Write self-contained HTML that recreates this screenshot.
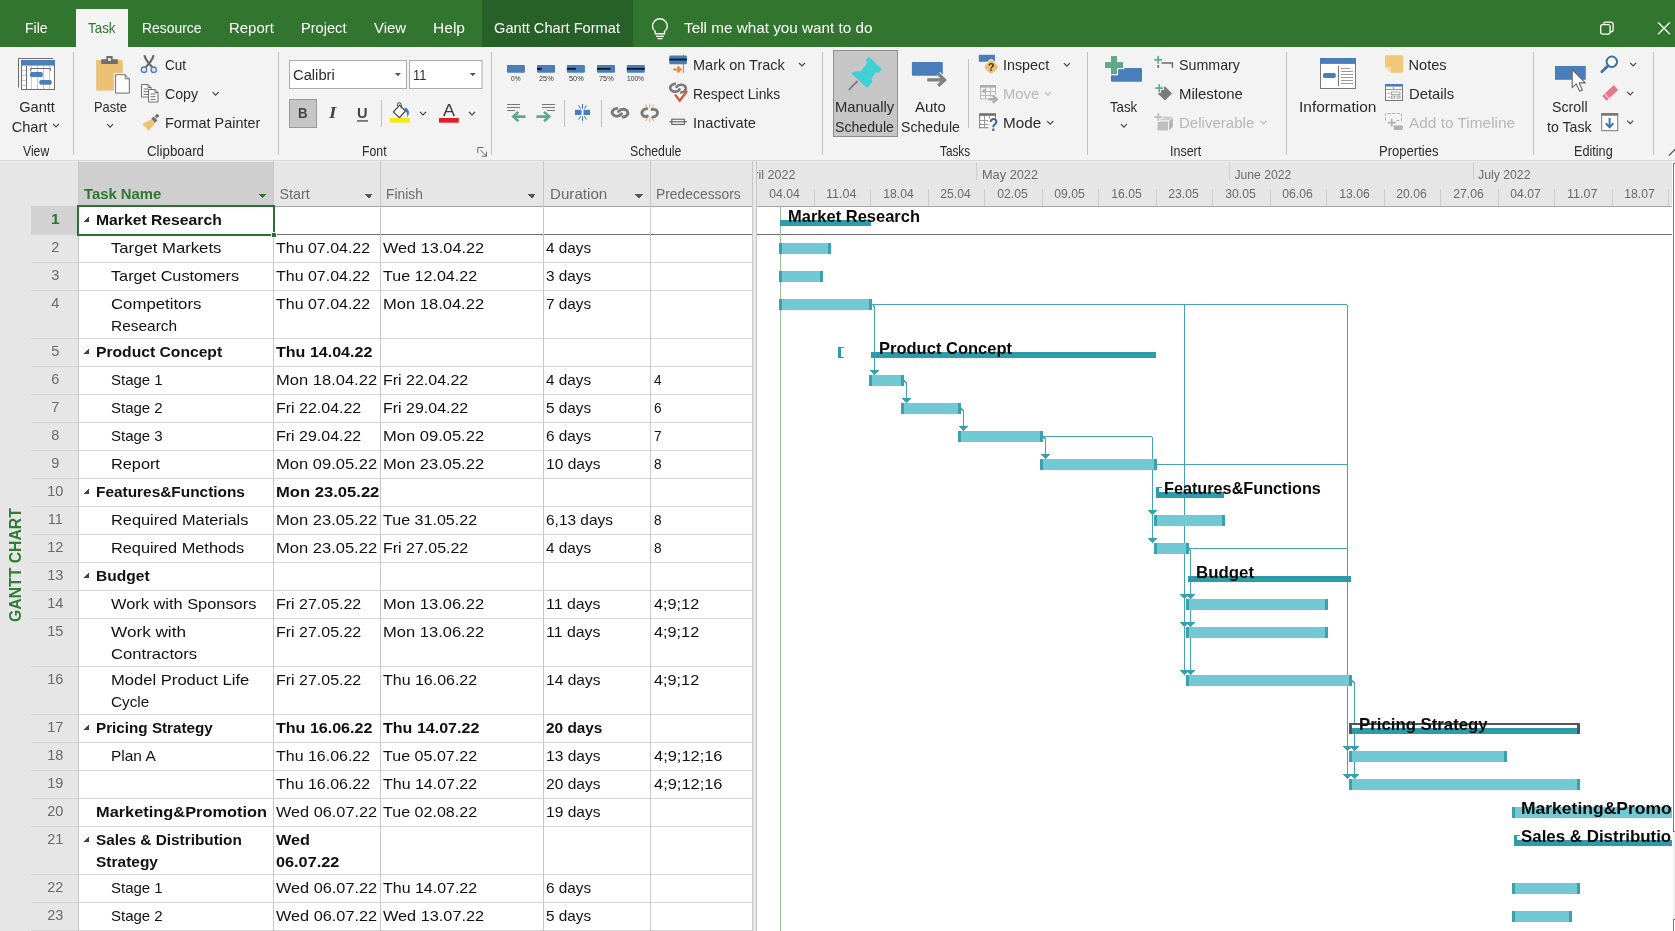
<!DOCTYPE html>
<html><head><meta charset="utf-8"><title>Project</title>
<style>
html,body{margin:0;padding:0}
body{width:1675px;height:931px;overflow:hidden;position:relative;background:#fff;font-family:"Liberation Sans",sans-serif;color:#262626}
.t{position:absolute;white-space:nowrap;line-height:1;transform-origin:0 0}
svg{position:absolute;left:0;top:0}
.clip{position:absolute;overflow:hidden}
.clip .t{}
.vl{position:absolute;left:7px;top:622px;font-size:16.5px;font-weight:700;color:#2E7D32;white-space:nowrap;line-height:1;transform-origin:0 0;transform:rotate(-90deg) scaleX(0.955)}
</style></head><body>
<svg width="1675" height="931" viewBox="0 0 1675 931" shape-rendering="crispEdges">
<rect x="0" y="161" width="1675" height="770" fill="#fff"/>
<rect x="0" y="161" width="78" height="770" fill="#E6E6E6"/>
<rect x="78" y="161" width="674" height="45" fill="#E6E6E6"/>
<rect x="78" y="161" width="195" height="45" fill="#CFCFCF"/>
<rect x="31" y="206" width="47" height="28" fill="#D2D2D2"/>
<rect x="752" y="161" width="5" height="770" fill="#E8E8E8"/>
<rect x="757" y="161" width="915" height="45" fill="#E6E6E6"/>
<rect x="0" y="160" width="1675" height="1" fill="#D6D6D6"/>
<rect x="0" y="161" width="1675" height="1" fill="#EDEDED"/>
<rect x="31" y="234" width="47" height="1" fill="#D4D4D4"/>
<rect x="78" y="234" width="674" height="1" fill="#6E6E6E"/>
<rect x="31" y="262" width="47" height="1" fill="#D4D4D4"/>
<rect x="78" y="262" width="674" height="1" fill="#D4D4D4"/>
<rect x="31" y="290" width="47" height="1" fill="#D4D4D4"/>
<rect x="78" y="290" width="674" height="1" fill="#D4D4D4"/>
<rect x="31" y="338" width="47" height="1" fill="#D4D4D4"/>
<rect x="78" y="338" width="674" height="1" fill="#D4D4D4"/>
<rect x="31" y="366" width="47" height="1" fill="#D4D4D4"/>
<rect x="78" y="366" width="674" height="1" fill="#D4D4D4"/>
<rect x="31" y="394" width="47" height="1" fill="#D4D4D4"/>
<rect x="78" y="394" width="674" height="1" fill="#D4D4D4"/>
<rect x="31" y="422" width="47" height="1" fill="#D4D4D4"/>
<rect x="78" y="422" width="674" height="1" fill="#D4D4D4"/>
<rect x="31" y="450" width="47" height="1" fill="#D4D4D4"/>
<rect x="78" y="450" width="674" height="1" fill="#D4D4D4"/>
<rect x="31" y="478" width="47" height="1" fill="#D4D4D4"/>
<rect x="78" y="478" width="674" height="1" fill="#D4D4D4"/>
<rect x="31" y="506" width="47" height="1" fill="#D4D4D4"/>
<rect x="78" y="506" width="674" height="1" fill="#D4D4D4"/>
<rect x="31" y="534" width="47" height="1" fill="#D4D4D4"/>
<rect x="78" y="534" width="674" height="1" fill="#D4D4D4"/>
<rect x="31" y="562" width="47" height="1" fill="#D4D4D4"/>
<rect x="78" y="562" width="674" height="1" fill="#D4D4D4"/>
<rect x="31" y="590" width="47" height="1" fill="#D4D4D4"/>
<rect x="78" y="590" width="674" height="1" fill="#D4D4D4"/>
<rect x="31" y="618" width="47" height="1" fill="#D4D4D4"/>
<rect x="78" y="618" width="674" height="1" fill="#D4D4D4"/>
<rect x="31" y="666" width="47" height="1" fill="#D4D4D4"/>
<rect x="78" y="666" width="674" height="1" fill="#D4D4D4"/>
<rect x="31" y="714" width="47" height="1" fill="#D4D4D4"/>
<rect x="78" y="714" width="674" height="1" fill="#D4D4D4"/>
<rect x="31" y="742" width="47" height="1" fill="#D4D4D4"/>
<rect x="78" y="742" width="674" height="1" fill="#D4D4D4"/>
<rect x="31" y="770" width="47" height="1" fill="#D4D4D4"/>
<rect x="78" y="770" width="674" height="1" fill="#D4D4D4"/>
<rect x="31" y="798" width="47" height="1" fill="#D4D4D4"/>
<rect x="78" y="798" width="674" height="1" fill="#D4D4D4"/>
<rect x="31" y="826" width="47" height="1" fill="#D4D4D4"/>
<rect x="78" y="826" width="674" height="1" fill="#D4D4D4"/>
<rect x="31" y="874" width="47" height="1" fill="#D4D4D4"/>
<rect x="78" y="874" width="674" height="1" fill="#D4D4D4"/>
<rect x="31" y="902" width="47" height="1" fill="#D4D4D4"/>
<rect x="78" y="902" width="674" height="1" fill="#D4D4D4"/>
<rect x="31" y="930" width="47" height="1" fill="#D4D4D4"/>
<rect x="78" y="930" width="674" height="1" fill="#D4D4D4"/>
<rect x="78" y="206" width="674" height="1" fill="#A6A6A6"/>
<rect x="78" y="161" width="1" height="770" fill="#C8C8C8"/>
<rect x="273" y="161" width="1" height="770" fill="#C8C8C8"/>
<rect x="380" y="161" width="1" height="770" fill="#C8C8C8"/>
<rect x="543" y="161" width="1" height="770" fill="#C8C8C8"/>
<rect x="650" y="161" width="1" height="770" fill="#C8C8C8"/>
<rect x="752" y="161" width="1" height="770" fill="#C8C8C8"/>
<rect x="756" y="161" width="1" height="770" fill="#C8C8C8"/>
<rect x="78" y="206" width="196" height="29" fill="#fff" stroke="#2F6F33" stroke-width="2"/>
<rect x="271.5" y="232.5" width="5" height="5" fill="#2F6F33" stroke="#fff" stroke-width="1"/>
<path d="M258.3 193.8h8.4l-4.2 4.6z" fill="#2E7530"/>
<path d="M364.6 193.8h8.4l-4.2 4.6z" fill="#555"/>
<path d="M527.5999999999999 193.8h8.4l-4.2 4.6z" fill="#555"/>
<path d="M634.8 193.8h8.4l-4.2 4.6z" fill="#555"/>
<path d="M83 222h6v-6z" fill="#444"/>
<path d="M83 354h6v-6z" fill="#444"/>
<path d="M83 494h6v-6z" fill="#444"/>
<path d="M83 578h6v-6z" fill="#444"/>
<path d="M83 730h6v-6z" fill="#444"/>
<path d="M83 842h6v-6z" fill="#444"/>
<rect x="814" y="189" width="1" height="17" fill="#CDCDCD"/>
<rect x="870" y="189" width="1" height="17" fill="#CDCDCD"/>
<rect x="928" y="189" width="1" height="17" fill="#CDCDCD"/>
<rect x="984" y="189" width="1" height="17" fill="#CDCDCD"/>
<rect x="1042" y="189" width="1" height="17" fill="#CDCDCD"/>
<rect x="1098" y="189" width="1" height="17" fill="#CDCDCD"/>
<rect x="1156" y="189" width="1" height="17" fill="#CDCDCD"/>
<rect x="1212" y="189" width="1" height="17" fill="#CDCDCD"/>
<rect x="1270" y="189" width="1" height="17" fill="#CDCDCD"/>
<rect x="1326" y="189" width="1" height="17" fill="#CDCDCD"/>
<rect x="1384" y="189" width="1" height="17" fill="#CDCDCD"/>
<rect x="1440" y="189" width="1" height="17" fill="#CDCDCD"/>
<rect x="1498" y="189" width="1" height="17" fill="#CDCDCD"/>
<rect x="1554" y="189" width="1" height="17" fill="#CDCDCD"/>
<rect x="1612" y="189" width="1" height="17" fill="#CDCDCD"/>
<rect x="1668" y="189" width="1" height="17" fill="#CDCDCD"/>
<rect x="976" y="163" width="1" height="17" fill="#CDCDCD"/>
<rect x="1229" y="163" width="1" height="17" fill="#CDCDCD"/>
<rect x="1473" y="163" width="1" height="17" fill="#CDCDCD"/>
<rect x="757" y="206" width="915" height="1" fill="#A6A6A6"/>
<rect x="757" y="234" width="915" height="1" fill="#6E6E6E"/>
<rect x="780" y="207" width="1" height="724" fill="#9CC29C"/>
<g shape-rendering="crispEdges"><path d="M872 304.5H1345.5Q1347.5 304.5 1347.5 306.5V778" fill="none" stroke="#45A3AD" stroke-width="1"/><path d="M872.5 304.5L874.5 307V370" fill="none" stroke="#45A3AD" stroke-width="1"/><path d="M1184.5 304.5V674" fill="none" stroke="#45A3AD" stroke-width="1"/><path d="M904 380.5L906.5 383V398" fill="none" stroke="#45A3AD" stroke-width="1"/><path d="M961 408.5L963.5 411V426" fill="none" stroke="#45A3AD" stroke-width="1"/><path d="M1043 436.5H1150.5Q1152.5 436.5 1152.5 438.5V538" fill="none" stroke="#45A3AD" stroke-width="1"/><path d="M1043 436.5L1045.5 439V454" fill="none" stroke="#45A3AD" stroke-width="1"/><path d="M1157 464.5H1347.5" fill="none" stroke="#45A3AD" stroke-width="1"/><path d="M1189 548.5H1347.5" fill="none" stroke="#45A3AD" stroke-width="1"/><path d="M1189 548.5L1190.5 551V674" fill="none" stroke="#45A3AD" stroke-width="1"/><path d="M1352 680.5L1354.5 683V778" fill="none" stroke="#45A3AD" stroke-width="1"/></g>
<rect x="780.3" y="220" width="90.3" height="6" fill="#2E9CA8"/>
<rect x="779" y="243" width="52" height="11" fill="#73C9D3"/><rect x="779" y="243" width="3" height="11" fill="#38A3AE"/><rect x="828" y="243" width="3" height="11" fill="#38A3AE"/>
<rect x="779" y="271" width="44" height="11" fill="#73C9D3"/><rect x="779" y="271" width="3" height="11" fill="#38A3AE"/><rect x="820" y="271" width="3" height="11" fill="#38A3AE"/>
<rect x="779" y="299" width="93" height="11" fill="#73C9D3"/><rect x="779" y="299" width="3" height="11" fill="#38A3AE"/><rect x="869" y="299" width="3" height="11" fill="#38A3AE"/>
<rect x="871" y="352" width="285" height="6" fill="#2E9CA8"/>
<rect x="838" y="347" width="3" height="11" fill="#2E9CA8"/><rect x="841" y="347" width="3" height="1" fill="#2E9CA8"/><rect x="841" y="357" width="3" height="1" fill="#2E9CA8"/>
<rect x="869" y="375" width="35" height="11" fill="#73C9D3"/><rect x="869" y="375" width="3" height="11" fill="#38A3AE"/><rect x="901" y="375" width="3" height="11" fill="#38A3AE"/>
<rect x="901" y="403" width="60" height="11" fill="#73C9D3"/><rect x="901" y="403" width="3" height="11" fill="#38A3AE"/><rect x="958" y="403" width="3" height="11" fill="#38A3AE"/>
<rect x="958" y="431" width="85" height="11" fill="#73C9D3"/><rect x="958" y="431" width="3" height="11" fill="#38A3AE"/><rect x="1040" y="431" width="3" height="11" fill="#38A3AE"/>
<rect x="1040" y="459" width="117" height="11" fill="#73C9D3"/><rect x="1040" y="459" width="3" height="11" fill="#38A3AE"/><rect x="1154" y="459" width="3" height="11" fill="#38A3AE"/>
<rect x="1156" y="492" width="68" height="6" fill="#2E9CA8"/><rect x="1156" y="487" width="3" height="5" fill="#2E9CA8"/><rect x="1159" y="487" width="3" height="1" fill="#2E9CA8"/>
<rect x="1154" y="515" width="71" height="11" fill="#73C9D3"/><rect x="1154" y="515" width="3" height="11" fill="#38A3AE"/><rect x="1222" y="515" width="3" height="11" fill="#38A3AE"/>
<rect x="1154" y="543" width="35" height="11" fill="#73C9D3"/><rect x="1154" y="543" width="3" height="11" fill="#38A3AE"/><rect x="1186" y="543" width="3" height="11" fill="#38A3AE"/>
<rect x="1188" y="576" width="163" height="6" fill="#2E9CA8"/>
<rect x="1186" y="599" width="142" height="11" fill="#73C9D3"/><rect x="1186" y="599" width="3" height="11" fill="#38A3AE"/><rect x="1325" y="599" width="3" height="11" fill="#38A3AE"/>
<rect x="1186" y="627" width="142" height="11" fill="#73C9D3"/><rect x="1186" y="627" width="3" height="11" fill="#38A3AE"/><rect x="1325" y="627" width="3" height="11" fill="#38A3AE"/>
<rect x="1186" y="675" width="166" height="11" fill="#73C9D3"/><rect x="1186" y="675" width="3" height="11" fill="#38A3AE"/><rect x="1349" y="675" width="3" height="11" fill="#38A3AE"/>
<rect x="1349" y="723" width="231" height="11" fill="#fff"/>
<rect x="1352" y="728" width="225" height="6" fill="#2E9CA8"/>
<rect x="1349" y="723" width="231" height="2" fill="#555"/><rect x="1349" y="723" width="3" height="11" fill="#555"/><rect x="1577" y="723" width="3" height="11" fill="#555"/>
<rect x="1349" y="751" width="158" height="11" fill="#73C9D3"/><rect x="1349" y="751" width="3" height="11" fill="#38A3AE"/><rect x="1504" y="751" width="3" height="11" fill="#38A3AE"/>
<rect x="1349" y="779" width="231" height="11" fill="#73C9D3"/><rect x="1349" y="779" width="3" height="11" fill="#38A3AE"/><rect x="1577" y="779" width="3" height="11" fill="#38A3AE"/>
<rect x="1512" y="807" width="160" height="11" fill="#73C9D3"/><rect x="1512" y="807" width="3" height="11" fill="#38A3AE"/>
<rect x="1514" y="840" width="158" height="6" fill="#2E9CA8"/><rect x="1514" y="835" width="3" height="5" fill="#2E9CA8"/><rect x="1517" y="835" width="3" height="1" fill="#2E9CA8"/>
<rect x="1512" y="883" width="68" height="11" fill="#73C9D3"/><rect x="1512" y="883" width="3" height="11" fill="#38A3AE"/><rect x="1577" y="883" width="3" height="11" fill="#38A3AE"/>
<rect x="1512" y="911" width="60" height="11" fill="#73C9D3"/><rect x="1512" y="911" width="3" height="11" fill="#38A3AE"/><rect x="1569" y="911" width="3" height="11" fill="#38A3AE"/>
<path d="M870.0 370.2h9l-4.5 4.5z" fill="#35A3AF"/>
<path d="M902.0 398.2h9l-4.5 4.5z" fill="#35A3AF"/>
<path d="M959.0 426.2h9l-4.5 4.5z" fill="#35A3AF"/>
<path d="M1041.0 454.2h9l-4.5 4.5z" fill="#35A3AF"/>
<path d="M1148.0 510.20000000000005h9l-4.5 4.5z" fill="#35A3AF"/>
<path d="M1148.0 538.2h9l-4.5 4.5z" fill="#35A3AF"/>
<path d="M1180.0 594.2h9l-4.5 4.5z" fill="#35A3AF"/>
<path d="M1186.0 594.2h9l-4.5 4.5z" fill="#35A3AF"/>
<path d="M1180.0 622.2h9l-4.5 4.5z" fill="#35A3AF"/>
<path d="M1186.0 622.2h9l-4.5 4.5z" fill="#35A3AF"/>
<path d="M1180.0 670.2h9l-4.5 4.5z" fill="#35A3AF"/>
<path d="M1186.0 670.2h9l-4.5 4.5z" fill="#35A3AF"/>
<path d="M1343.0 746.2h9l-4.5 4.5z" fill="#35A3AF"/>
<path d="M1350.0 746.2h9l-4.5 4.5z" fill="#35A3AF"/>
<path d="M1343.0 774.2h9l-4.5 4.5z" fill="#35A3AF"/>
<path d="M1350.0 774.2h9l-4.5 4.5z" fill="#35A3AF"/>
<rect x="1672" y="161" width="3" height="770" fill="#F0F0F0"/>
<rect x="1672" y="161" width="1" height="770" fill="#fff"/>
<rect x="1673" y="163" width="2" height="669" fill="#fff"/><rect x="1673" y="163" width="1" height="669" fill="#777"/><rect x="1673" y="163" width="2" height="1" fill="#777"/><rect x="1673" y="831" width="2" height="1" fill="#777"/>
<rect x="1673" y="919" width="2" height="12" fill="#fff"/><rect x="1673" y="919" width="1" height="12" fill="#777"/><rect x="1673" y="919" width="2" height="1" fill="#777"/>
</svg>
<svg width="1675" height="162" viewBox="0 0 1675 162">
<rect x="0" y="47" width="1675" height="113" fill="#F3F3F3"/><path d="M18.5 87.5V58.5H53" fill="none" stroke="#6E6E6E" stroke-width="1"/><rect x="21.5" y="60.5" width="33" height="29" fill="#fff" stroke="#6E6E6E" stroke-width="1"/><rect x="21" y="60" width="34" height="5.6" fill="#4A7EBB"/><line x1="31.5" y1="66" x2="31.5" y2="89" stroke="#C9C9C9" stroke-width="1"/><line x1="37.5" y1="66" x2="37.5" y2="89" stroke="#C9C9C9" stroke-width="1"/><line x1="43.5" y1="66" x2="43.5" y2="89" stroke="#C9C9C9" stroke-width="1"/><line x1="49.5" y1="66" x2="49.5" y2="89" stroke="#C9C9C9" stroke-width="1"/><line x1="26.5" y1="66" x2="26.5" y2="89" stroke="#6E6E6E" stroke-width="1"/><line x1="22" y1="70.5" x2="26" y2="70.5" stroke="#C9C9C9" stroke-width="1"/><line x1="22" y1="75.5" x2="26" y2="75.5" stroke="#C9C9C9" stroke-width="1"/><line x1="22" y1="80.5" x2="26" y2="80.5" stroke="#C9C9C9" stroke-width="1"/><line x1="22" y1="85.5" x2="26" y2="85.5" stroke="#C9C9C9" stroke-width="1"/><path d="M30.5 70.7V68.5H50.5V70.7" fill="none" stroke="#6E6E6E" stroke-width="1"/><rect x="30" y="72" width="12.8" height="5" rx="1.6" fill="#4A7EBB"/><rect x="39.3" y="80" width="12.4" height="4.7" rx="1.6" fill="#4A7EBB"/><path d="M53 123.8l3 3l3-3" fill="none" stroke="#444" stroke-width="1.2"/><rect x="73" y="52" width="1" height="103" fill="#C2C2C2" shape-rendering="crispEdges"/><rect x="96.2" y="60" width="26.5" height="30.6" fill="#EBC274"/><path d="M101.2 64V59.2H106.3V56H112.7V59.2H117.8V64z" fill="#6E6E6E"/><rect x="108.1" y="58.2" width="2.8" height="2.6" fill="#F3F3F3"/><path d="M115.1 93.6V74.2H125.4L129.8 78.6V93.6z" fill="#fff" stroke="#F3F3F3" stroke-width="2.4"/><path d="M115.6 93.1V74.7H125.2L129.3 78.8V93.1z" fill="#fff" stroke="#6E6E6E" stroke-width="1"/><path d="M125.2 74.7V78.8H129.3" fill="none" stroke="#6E6E6E" stroke-width="1"/><path d="M107.1 124.2l3 3l3-3" fill="none" stroke="#444" stroke-width="1.2"/><path d="M144.4 55.3C145.6 59.6 148.6 63.6 152.4 67.2M153.6 55.3C152.4 59.6 149.4 63.6 145.6 67.2" fill="none" stroke="#666" stroke-width="2.2"/><circle cx="144" cy="69.7" r="2.7" fill="#DCE8F5" stroke="#4A7EBB" stroke-width="1.3"/><circle cx="153.7" cy="69.7" r="2.7" fill="#DCE8F5" stroke="#4A7EBB" stroke-width="1.3"/><path d="M141.5 84.5H148.0L151.0 87.5V97.0H141.5z" fill="#fff" stroke="#6E6E6E" stroke-width="1"/><path d="M148.0 84.5V87.5H151.0" fill="none" stroke="#6E6E6E" stroke-width="1"/><line x1="143.5" y1="89" x2="148.5" y2="89" stroke="#6E6E6E" stroke-width="1"/><line x1="143.5" y1="91.7" x2="148.5" y2="91.7" stroke="#6E6E6E" stroke-width="1"/><line x1="143.5" y1="94.4" x2="148.5" y2="94.4" stroke="#6E6E6E" stroke-width="1"/><path d="M148.5 89.5H155.0L158.0 92.5V102.0H148.5z" fill="#fff" stroke="#6E6E6E" stroke-width="1"/><path d="M155.0 89.5V92.5H158.0" fill="none" stroke="#6E6E6E" stroke-width="1"/><line x1="150.5" y1="94" x2="155.5" y2="94" stroke="#6E6E6E" stroke-width="1"/><line x1="150.5" y1="96.7" x2="155.5" y2="96.7" stroke="#6E6E6E" stroke-width="1"/><line x1="150.5" y1="99.4" x2="155.5" y2="99.4" stroke="#6E6E6E" stroke-width="1"/><path d="M212.6 92.1l3 3l3-3" fill="none" stroke="#444" stroke-width="1.2"/><path d="M142 124.1L151.8 119L155.3 123.1L148.6 131.1L146.2 128z" fill="#EBC274"/><path d="M151.3 118.4L153.8 116.4L157.4 120.6L155 122.7z" fill="#6E6E6E"/><path d="M154.6 115.9L157.3 113.7L159.3 116.1L156.7 118.3z" fill="#6E6E6E"/><rect x="278" y="52" width="1" height="103" fill="#C2C2C2" shape-rendering="crispEdges"/>
<rect x="0" y="0" width="1675" height="47" fill="#31752F"/><rect x="482" y="0" width="151" height="47" fill="#276127"/><rect x="76" y="9" width="52" height="38" fill="#F3F3F3"/><path d="M655.3 31.5c-2-1.6-2.8-3.4-2.8-5.3a7.4 7.4 0 0 1 14.8 0c0 1.9-.8 3.7-2.8 5.3v2.3h-9.2z" fill="none" stroke="#fff" stroke-width="1.4"/><line x1="656" y1="36.3" x2="664" y2="36.3" stroke="#fff" stroke-width="1.3"/><line x1="657.5" y1="38.6" x2="662.5" y2="38.6" stroke="#fff" stroke-width="1.3"/><rect x="1600.7" y="24.7" width="9.4" height="9.4" rx="2" fill="none" stroke="#fff" stroke-width="1.3"/><path d="M1603.6 24.5v-.4a2 2 0 0 1 2-2h5.2a2.3 2.3 0 0 1 2.3 2.3v5.4a2 2 0 0 1-2 2h-.6" fill="none" stroke="#fff" stroke-width="1.3"/><path d="M1658 22.2l12 12M1670 22.2l-12 12" fill="none" stroke="#fff" stroke-width="1.3"/>
<rect x="289.5" y="60.5" width="117" height="28" fill="#fff" stroke="#ABABAB" stroke-width="1"/><rect x="409.5" y="60.5" width="72.5" height="28" fill="#fff" stroke="#ABABAB" stroke-width="1"/><path d="M394.9 73h6l-3 3.2z" fill="#555"/><path d="M469.8 73h6l-3 3.2z" fill="#555"/><rect x="289.5" y="99.5" width="27" height="28" fill="#C6C6C6" stroke="#9A9A9A" stroke-width="1"/><rect x="357" y="120.3" width="11" height="1.3" fill="#444"/><rect x="381" y="100" width="1" height="27" fill="#C2C2C2"/><path d="M399.6 105.2L405.4 111L399.4 117.6L393.4 112z" fill="#fff" stroke="#444" stroke-width="1.2"/><path d="M401.2 108.4V104.6a1.9 1.9 0 0 0-3.8 0V106" fill="none" stroke="#444" stroke-width="1"/><path d="M404.4 107.4C408.8 108.4 410.6 112.6 407.2 117.4C407.6 114.2 407 112.6 405.2 110.8z" fill="#3F74B5"/><rect x="390" y="118" width="19.7" height="4.7" fill="#F2E61C"/><path d="M420 111.8l3 3l3-3" fill="none" stroke="#444" stroke-width="1.2"/><rect x="439" y="118" width="19.8" height="4.7" fill="#E21F26"/><path d="M469 111.8l3 3l3-3" fill="none" stroke="#444" stroke-width="1.2"/><path d="M477.8 153V147.5H483.3" fill="none" stroke="#666" stroke-width="1"/><path d="M480.5 150.2L486.3 156M486.5 151.6V156.2H481.9" fill="none" stroke="#666" stroke-width="1"/><rect x="491" y="52" width="1" height="103" fill="#C2C2C2" shape-rendering="crispEdges"/>
<rect x="506.9" y="64.9" width="18" height="7.8" rx="1" fill="#4A7EBB"/><rect x="537" y="64.9" width="18" height="7.8" rx="1" fill="#4A7EBB"/><rect x="537" y="67.9" width="4.86" height="1.9" fill="#0E1A2B"/><rect x="566.9" y="64.9" width="18" height="7.8" rx="1" fill="#4A7EBB"/><rect x="566.9" y="67.9" width="9" height="1.9" fill="#0E1A2B"/><rect x="597" y="64.9" width="18" height="7.8" rx="1" fill="#4A7EBB"/><rect x="597" y="67.9" width="13.5" height="1.9" fill="#0E1A2B"/><rect x="626.8" y="64.9" width="18" height="7.8" rx="1" fill="#4A7EBB"/><rect x="626.8" y="67.9" width="18" height="1.9" fill="#0E1A2B"/><line x1="507" y1="104.5" x2="520" y2="104.5" stroke="#777" stroke-width="1"/><line x1="507" y1="107.5" x2="520" y2="107.5" stroke="#777" stroke-width="1"/><line x1="507" y1="110.5" x2="515" y2="110.5" stroke="#777" stroke-width="1"/><path d="M525.6 116.6H514.5M518.4 111.9L513.3 116.6L518.4 121.3" fill="none" stroke="#5FA88C" stroke-width="2.6"/><line x1="542" y1="104.5" x2="555" y2="104.5" stroke="#777" stroke-width="1"/><line x1="542" y1="107.5" x2="555" y2="107.5" stroke="#777" stroke-width="1"/><line x1="547" y1="110.5" x2="555" y2="110.5" stroke="#777" stroke-width="1"/><path d="M536.4 116.6H548M544 111.9L549.2 116.6L544 121.3" fill="none" stroke="#5FA88C" stroke-width="2.6"/><rect x="564" y="100" width="1" height="27" fill="#C2C2C2"/><rect x="575" y="109.8" width="6.5" height="5.2" fill="#4A7EBB"/><rect x="583.5" y="109.8" width="6.5" height="5.2" fill="#4A7EBB"/><path d="M582.5 104V108.6M582.5 116.2V120.8M578.6 105.3L580.6 108.6M586.4 105.3L584.4 108.6M578.6 119.6L580.6 116.2M586.4 119.6L584.4 116.2" fill="none" stroke="#3F6FA8" stroke-width="1"/><rect x="601" y="100" width="1" height="27" fill="#C2C2C2"/><g fill="none" stroke="#7A7A7A" stroke-width="2.9" stroke-linecap="round"><path d="M621.5 113.9c-1.8 2.6-6.5 3.1-8.4 .8c-2.2-2.7-.3-5.8 3.8-6.3"/><path d="M618.5 111.5c1.8-2.6 6.5-3.1 8.4-.8c2.2 2.7 .3 5.8-3.8 6.3"/></g><g fill="none" stroke="#7A7A7A" stroke-width="2.9" stroke-linecap="round"><path d="M647.3000000000001 116.30000000000001c-2.3 .4-4.6-.4-5.2-2.2c-.9-2.8 1.3-5.2 4.7-5.4"/><path d="M652.1 109.5c2.3-.4 4.6 .4 5.2 2.2c.9 2.8-1.3 5.2-4.7 5.4"/></g><path d="M649.7 103.6V107.6M649.7 118.2V122.4M645.6 104.6L647.4 107.8M653.8 104.6L652 107.8M645.6 121.2L647.4 118M653.8 121.2L652 118" fill="none" stroke="#E9A55B" stroke-width="1"/><rect x="682.8" y="54.5" width="1.2" height="18.3" fill="#E58A3C"/><rect x="669.3" y="55.4" width="17.6" height="8.9" rx="1" fill="#4A7EBB"/><rect x="669.3" y="58.6" width="17.6" height="1.9" fill="#0E1A2B"/><path d="M673.2 69.4H680M677.4 66.4L680.6 69.4L677.4 72.4" fill="none" stroke="#E58A3C" stroke-width="2"/><path d="M799 63.0l3 3l3-3" fill="none" stroke="#444" stroke-width="1.2"/><g fill="none" stroke="#7A7A7A" stroke-width="2.6" stroke-linecap="round"><path d="M679.5 89.4c-1.8 2.6-6.5 3.1-8.4 .8c-2.2-2.7-.3-5.8 3.8-6.3"/><path d="M676.5 87.0c1.8-2.6 6.5-3.1 8.4-.8c2.2 2.7 .3 5.8-3.8 6.3"/></g><path d="M675 94.6L679.8 100.6L687 91" fill="none" stroke="#D2562F" stroke-width="2.3"/><rect x="671.8" y="119.2" width="12.5" height="5.2" fill="none" stroke="#555" stroke-width="1"/><line x1="669.3" y1="121.8" x2="687" y2="121.8" stroke="#555" stroke-width="1"/><rect x="822" y="52" width="1" height="103" fill="#C2C2C2" shape-rendering="crispEdges"/>
<rect x="833.5" y="50.5" width="64" height="86" fill="#C6C6C6" stroke="#8F8F8F" stroke-width="1"/><line x1="857.6" y1="81" x2="848.8" y2="89.8" stroke="#7C7C7C" stroke-width="1.8"/><path d="M865.5 60.2L869.2 57L882.1 69.3L878.9 73.1L876.4 71.7L871.6 78.3L872.4 82.2L867.1 88.1L851 73.1L856.9 71L860.6 71.6L867.4 63z" fill="#3FD0D4"/><rect x="911.9" y="62" width="30.9" height="13.8" rx="1" fill="#4A7EBB"/><path d="M927.3 79.9H944M938.2 74L944.6 79.9L938.2 85.8" fill="none" stroke="#F3F3F3" stroke-width="5.2"/><path d="M927.3 79.9H944M938.2 74L944.6 79.9L938.2 85.8" fill="none" stroke="#808080" stroke-width="3.3"/><rect x="968" y="59" width="1" height="69" fill="#C2C2C2"/><rect x="978.8" y="54.8" width="16.2" height="7" fill="#4A7EBB"/><rect x="984.9" y="60.6" width="12.6" height="12.6" rx="3.2" fill="#F3F3F3" transform="rotate(45 991.2 66.9)"/><rect x="985.8" y="61.5" width="10.8" height="10.8" rx="2.8" fill="#EBC06F" transform="rotate(45 991.2 66.9)"/><path d="M1063.9 63.2l3 3l3-3" fill="none" stroke="#444" stroke-width="1.2"/><rect x="980.5" y="85.5" width="15" height="13.5" fill="none" stroke="#B8B8B8" stroke-width="1"/><rect x="980" y="85" width="16" height="2.6" fill="#ADADAD"/><line x1="985.5" y1="87" x2="985.5" y2="99" stroke="#B8B8B8" stroke-width="1"/><line x1="990.5" y1="87" x2="990.5" y2="99" stroke="#B8B8B8" stroke-width="1"/><line x1="981" y1="91.5" x2="995" y2="91.5" stroke="#B8B8B8" stroke-width="1"/><line x1="981" y1="95.5" x2="995" y2="95.5" stroke="#B8B8B8" stroke-width="1"/><rect x="982.8" y="89.2" width="3.4" height="3.4" fill="#ADADAD"/><path d="M988.4 99.2H996M992.8 95.6L996.8 99.2L992.8 102.8" fill="none" stroke="#F3F3F3" stroke-width="4.4"/><path d="M988.4 99.2H996M992.8 95.6L996.8 99.2L992.8 102.8" fill="none" stroke="#ADADAD" stroke-width="2.5"/><path d="M1044.9 92.1l3 3l3-3" fill="none" stroke="#B8B8B8" stroke-width="1.2"/><rect x="979.7" y="113.9" width="15.8" height="13.8" fill="#fff" stroke="#777" stroke-width="1"/><rect x="979.2" y="113.4" width="16.8" height="2.5" fill="#777"/><line x1="984.5" y1="116" x2="984.5" y2="127.5" stroke="#999" stroke-width="1"/><line x1="989.5" y1="116" x2="989.5" y2="127.5" stroke="#999" stroke-width="1"/><line x1="980" y1="120.5" x2="995" y2="120.5" stroke="#999" stroke-width="1"/><line x1="980" y1="124.5" x2="995" y2="124.5" stroke="#999" stroke-width="1"/><rect x="988.3" y="118.3" width="10.5" height="14.5" fill="#F3F3F3"/><path d="M1047.2 121.1l3 3l3-3" fill="none" stroke="#444" stroke-width="1.2"/><rect x="1087" y="52" width="1" height="103" fill="#C2C2C2" shape-rendering="crispEdges"/>
<rect x="1111" y="68" width="31" height="13.8" rx="1" fill="#4A7EBB"/><rect x="1103.8" y="61" width="20.4" height="8.2" fill="#F3F3F3"/><rect x="1109.9" y="54.9" width="8.2" height="20.4" fill="#F3F3F3"/><rect x="1105" y="62.1" width="18" height="6" fill="#5FA88C"/><rect x="1111" y="56.1" width="6" height="18" fill="#5FA88C"/><path d="M1120.9 124.2l3 3l3-3" fill="none" stroke="#444" stroke-width="1.2"/><rect x="1154.3" y="58.95" width="7.8" height="1.7" fill="#5FA88C"/><rect x="1157.35" y="55.9" width="1.7" height="7.8" fill="#5FA88C"/><path d="M1161.5 63H1172.4V67.8" fill="none" stroke="#6E6E6E" stroke-width="1.5"/><rect x="1157.3" y="65" width="1.8" height="2.8" fill="#6E6E6E"/><path d="M1164.9 86.2L1172.1 93.4L1164.9 100.6L1157.7 93.4z" fill="#7B7B7B"/><rect x="1154.3" y="86.25" width="9.8" height="3.7" fill="#F3F3F3"/><rect x="1157.35" y="83.2" width="3.7" height="9.8" fill="#F3F3F3"/><rect x="1155.3" y="87.25" width="7.8" height="1.7" fill="#5FA88C"/><rect x="1158.35" y="84.2" width="1.7" height="7.8" fill="#5FA88C"/><path d="M1157.5 121.5H1168V130.5H1157.5z" fill="#BEBEBE"/><path d="M1158.5 120.3L1162.5 116.5H1172.6L1169 120.3z" fill="#CDCDCD"/><path d="M1169.2 121.3L1172.8 117.5V126.5L1169.2 130.3z" fill="#B0B0B0"/><rect x="1153.4" y="115.15" width="9.8" height="3.7" fill="#F3F3F3"/><rect x="1156.45" y="112.1" width="3.7" height="9.8" fill="#F3F3F3"/><rect x="1154.4" y="116.15" width="7.8" height="1.7" fill="#BEBEBE"/><rect x="1157.45" y="113.1" width="1.7" height="7.8" fill="#BEBEBE"/><path d="M1260.4 120.8l3 3l3-3" fill="none" stroke="#B8B8B8" stroke-width="1.2"/><rect x="1286" y="52" width="1" height="103" fill="#C2C2C2" shape-rendering="crispEdges"/>
<rect x="1320.5" y="58.5" width="35" height="30" fill="#fff" stroke="#777" stroke-width="1"/><rect x="1320" y="58" width="36" height="5.9" fill="#4A7EBB"/><line x1="1338.5" y1="66" x2="1338.5" y2="86" stroke="#777" stroke-width="1"/><rect x="1323" y="73.1" width="12.8" height="4.8" rx="1.6" fill="#4A7EBB"/><line x1="1341" y1="68.5" x2="1350" y2="68.5" stroke="#9A9A9A" stroke-width="1"/><line x1="1341" y1="71.5" x2="1353" y2="71.5" stroke="#9A9A9A" stroke-width="1"/><line x1="1341" y1="74.5" x2="1353" y2="74.5" stroke="#9A9A9A" stroke-width="1"/><line x1="1341" y1="77.5" x2="1353" y2="77.5" stroke="#9A9A9A" stroke-width="1"/><line x1="1341" y1="80.5" x2="1353" y2="80.5" stroke="#9A9A9A" stroke-width="1"/><line x1="1341" y1="83.5" x2="1353" y2="83.5" stroke="#9A9A9A" stroke-width="1"/><path d="M1385 55.2H1403.2V72.8H1391L1385 67z" fill="#EFC878"/><path d="M1385 67H1391V72.8z" fill="#F7E0AE"/><rect x="1385.5" y="84.5" width="17" height="16" fill="#fff" stroke="#777" stroke-width="1"/><rect x="1385" y="84" width="18" height="2.6" fill="#4A7EBB"/><line x1="1386" y1="89.5" x2="1402.5" y2="89.5" stroke="#999" stroke-width="1"/><line x1="1393.5" y1="87" x2="1393.5" y2="89.5" stroke="#999" stroke-width="1"/><rect x="1391.5" y="92" width="8.5" height="2.4" fill="none" stroke="#999" stroke-width="0.9"/><rect x="1391.5" y="96" width="3" height="2.2" fill="none" stroke="#999" stroke-width="0.9"/><rect x="1397" y="96" width="3" height="2.2" fill="none" stroke="#999" stroke-width="0.9"/><line x1="1387.5" y1="93.2" x2="1390" y2="93.2" stroke="#999" stroke-width="1"/><line x1="1387.5" y1="97.2" x2="1390" y2="97.2" stroke="#999" stroke-width="1"/><path d="M1385.5 120.5V113.5H1401.5V120.5H1396.5" fill="none" stroke="#ADADAD" stroke-width="1" stroke-dasharray="3 1.6"/><rect x="1387.8" y="121.85" width="7.8" height="1.7" fill="#ADADAD"/><rect x="1390.85" y="118.8" width="1.7" height="7.8" fill="#ADADAD"/><rect x="1393.2" y="125" width="10" height="5.4" rx="1.5" fill="#ADADAD" stroke="#F3F3F3" stroke-width="1"/><rect x="1533" y="52" width="1" height="103" fill="#C2C2C2" shape-rendering="crispEdges"/>
<rect x="1555" y="66" width="30.8" height="13.8" fill="#4A7EBB"/><path d="M1572.2 69.5V87.6L1576.3 83.9L1579.7 91.2L1582.4 90L1579.1 82.9L1585.3 82.9z" fill="#fff" stroke="#666" stroke-width="1.1" stroke-linejoin="round"/><circle cx="1611.8" cy="61.8" r="5.2" fill="#fff" stroke="#3E6FA3" stroke-width="2"/><line x1="1607.6" y1="66.2" x2="1601.8" y2="71.8" stroke="#3E6FA3" stroke-width="2.6" stroke-linecap="round"/><path d="M1630.2 62.900000000000006l3 3l3-3" fill="none" stroke="#444" stroke-width="1.2"/><path d="M1613.8 85.1L1618.2 89.9L1606.7 100.8L1602.2 96z" fill="#E27A8E"/><line x1="1604.6" y1="93.7" x2="1609.2" y2="98.6" stroke="#F7DDE2" stroke-width="1.1"/><path d="M1627.2 91.8l3 3l3-3" fill="none" stroke="#444" stroke-width="1.2"/><rect x="1601.7" y="113.7" width="16" height="17" fill="#fff" stroke="#777" stroke-width="1"/><rect x="1601.2" y="113.2" width="17" height="2.5" fill="#777"/><path d="M1609.6 118V126.5M1605.8 123.3L1609.6 127.2L1613.4 123.3" fill="none" stroke="#3F74B5" stroke-width="2"/><path d="M1627.2 120.7l3 3l3-3" fill="none" stroke="#444" stroke-width="1.2"/><rect x="1653" y="52" width="1" height="103" fill="#C2C2C2" shape-rendering="crispEdges"/><path d="M1669 155.5L1675 149.5" fill="none" stroke="#555" stroke-width="1.2"/>
</svg>
<div id="tx" style="position:absolute;left:0;top:0;width:1675px;height:931px;will-change:transform">
<span class="t" style="left:84.3px;top:187.0px;font-size:14.3px;font-weight:700;color:#2E7530;transform:scaleX(1.038);">Task Name</span>
<span class="t" style="left:279.5px;top:187.0px;font-size:14.3px;color:#6B6B6B;">Start</span>
<span class="t" style="left:386.1px;top:187.0px;font-size:14.3px;color:#6B6B6B;transform:scaleX(0.965);">Finish</span>
<span class="t" style="left:549.6px;top:187.0px;font-size:14.3px;color:#6B6B6B;transform:scaleX(1.060);">Duration</span>
<span class="t" style="left:656.3px;top:187.0px;font-size:14.3px;color:#6B6B6B;transform:scaleX(0.970);">Predecessors</span>
<span class="t" style="left:51.0px;top:210.7px;font-size:15.5px;font-weight:700;color:#2E7530;">1</span>
<span class="t" style="left:95.5px;top:212.8px;font-size:14.1px;font-weight:700;color:#111;transform:scaleX(1.115);">Market Research</span>
<span class="t" style="left:51.3px;top:239.6px;font-size:14.5px;color:#6A6A6A;">2</span>
<span class="t" style="left:111.3px;top:240.8px;font-size:14.1px;color:#111;transform:scaleX(1.184);">Target Markets</span>
<span class="t" style="left:276.2px;top:240.8px;font-size:14.1px;color:#111;transform:scaleX(1.133);">Thu 07.04.22</span>
<span class="t" style="left:383.3px;top:240.8px;font-size:14.1px;color:#111;transform:scaleX(1.155);">Wed 13.04.22</span>
<span class="t" style="left:546.3px;top:240.8px;font-size:14.1px;color:#111;transform:scaleX(1.088);">4 days</span>
<span class="t" style="left:51.3px;top:267.6px;font-size:14.5px;color:#6A6A6A;">3</span>
<span class="t" style="left:111.3px;top:268.8px;font-size:14.1px;color:#111;transform:scaleX(1.152);">Target Customers</span>
<span class="t" style="left:276.2px;top:268.8px;font-size:14.1px;color:#111;transform:scaleX(1.133);">Thu 07.04.22</span>
<span class="t" style="left:383.3px;top:268.8px;font-size:14.1px;color:#111;transform:scaleX(1.140);">Tue 12.04.22</span>
<span class="t" style="left:546.3px;top:268.8px;font-size:14.1px;color:#111;transform:scaleX(1.088);">3 days</span>
<span class="t" style="left:51.3px;top:295.6px;font-size:14.5px;color:#6A6A6A;">4</span>
<span class="t" style="left:111.3px;top:296.8px;font-size:14.1px;color:#111;transform:scaleX(1.190);">Competitors</span>
<span class="t" style="left:111.3px;top:318.8px;font-size:14.1px;color:#111;transform:scaleX(1.096);">Research</span>
<span class="t" style="left:276.2px;top:296.8px;font-size:14.1px;color:#111;transform:scaleX(1.133);">Thu 07.04.22</span>
<span class="t" style="left:383.3px;top:296.8px;font-size:14.1px;color:#111;transform:scaleX(1.173);">Mon 18.04.22</span>
<span class="t" style="left:546.3px;top:296.8px;font-size:14.1px;color:#111;transform:scaleX(1.088);">7 days</span>
<span class="t" style="left:51.3px;top:343.6px;font-size:14.5px;color:#6A6A6A;">5</span>
<span class="t" style="left:95.5px;top:344.8px;font-size:14.1px;font-weight:700;color:#111;transform:scaleX(1.111);">Product Concept</span>
<span class="t" style="left:51.3px;top:371.6px;font-size:14.5px;color:#6A6A6A;">6</span>
<span class="t" style="left:111.3px;top:372.8px;font-size:14.1px;color:#111;transform:scaleX(1.064);">Stage 1</span>
<span class="t" style="left:276.2px;top:372.8px;font-size:14.1px;color:#111;transform:scaleX(1.173);">Mon 18.04.22</span>
<span class="t" style="left:383.3px;top:372.8px;font-size:14.1px;color:#111;transform:scaleX(1.133);">Fri 22.04.22</span>
<span class="t" style="left:546.3px;top:372.8px;font-size:14.1px;color:#111;transform:scaleX(1.088);">4 days</span>
<span class="t" style="left:653.5px;top:372.8px;font-size:14.1px;color:#111;transform:scaleX(0.969);">4</span>
<span class="t" style="left:51.3px;top:399.6px;font-size:14.5px;color:#6A6A6A;">7</span>
<span class="t" style="left:111.3px;top:400.8px;font-size:14.1px;color:#111;transform:scaleX(1.064);">Stage 2</span>
<span class="t" style="left:276.2px;top:400.8px;font-size:14.1px;color:#111;transform:scaleX(1.133);">Fri 22.04.22</span>
<span class="t" style="left:383.3px;top:400.8px;font-size:14.1px;color:#111;transform:scaleX(1.133);">Fri 29.04.22</span>
<span class="t" style="left:546.3px;top:400.8px;font-size:14.1px;color:#111;transform:scaleX(1.088);">5 days</span>
<span class="t" style="left:653.5px;top:400.8px;font-size:14.1px;color:#111;transform:scaleX(0.969);">6</span>
<span class="t" style="left:51.3px;top:427.6px;font-size:14.5px;color:#6A6A6A;">8</span>
<span class="t" style="left:111.3px;top:428.8px;font-size:14.1px;color:#111;transform:scaleX(1.064);">Stage 3</span>
<span class="t" style="left:276.2px;top:428.8px;font-size:14.1px;color:#111;transform:scaleX(1.133);">Fri 29.04.22</span>
<span class="t" style="left:383.3px;top:428.8px;font-size:14.1px;color:#111;transform:scaleX(1.173);">Mon 09.05.22</span>
<span class="t" style="left:546.3px;top:428.8px;font-size:14.1px;color:#111;transform:scaleX(1.088);">6 days</span>
<span class="t" style="left:653.5px;top:428.8px;font-size:14.1px;color:#111;transform:scaleX(0.969);">7</span>
<span class="t" style="left:51.3px;top:455.6px;font-size:14.5px;color:#6A6A6A;">9</span>
<span class="t" style="left:111.3px;top:456.8px;font-size:14.1px;color:#111;transform:scaleX(1.156);">Report</span>
<span class="t" style="left:276.2px;top:456.8px;font-size:14.1px;color:#111;transform:scaleX(1.173);">Mon 09.05.22</span>
<span class="t" style="left:383.3px;top:456.8px;font-size:14.1px;color:#111;transform:scaleX(1.173);">Mon 23.05.22</span>
<span class="t" style="left:546.3px;top:456.8px;font-size:14.1px;color:#111;transform:scaleX(1.104);">10 days</span>
<span class="t" style="left:653.5px;top:456.8px;font-size:14.1px;color:#111;transform:scaleX(0.969);">8</span>
<span class="t" style="left:47.2px;top:483.6px;font-size:14.5px;color:#6A6A6A;">10</span>
<span class="t" style="left:95.5px;top:484.8px;font-size:14.1px;font-weight:700;color:#111;transform:scaleX(1.093);">Features&amp;Functions</span>
<span class="t" style="left:47.8px;top:511.6px;font-size:14.5px;color:#6A6A6A;">11</span>
<span class="t" style="left:111.3px;top:512.8px;font-size:14.1px;color:#111;transform:scaleX(1.161);">Required Materials</span>
<span class="t" style="left:276.2px;top:512.8px;font-size:14.1px;color:#111;transform:scaleX(1.173);">Mon 23.05.22</span>
<span class="t" style="left:383.3px;top:512.8px;font-size:14.1px;color:#111;transform:scaleX(1.140);">Tue 31.05.22</span>
<span class="t" style="left:546.3px;top:512.8px;font-size:14.1px;color:#111;transform:scaleX(1.096);">6,13 days</span>
<span class="t" style="left:653.5px;top:512.8px;font-size:14.1px;color:#111;transform:scaleX(0.969);">8</span>
<span class="t" style="left:47.2px;top:539.6px;font-size:14.5px;color:#6A6A6A;">12</span>
<span class="t" style="left:111.3px;top:540.8px;font-size:14.1px;color:#111;transform:scaleX(1.157);">Required Methods</span>
<span class="t" style="left:276.2px;top:540.8px;font-size:14.1px;color:#111;transform:scaleX(1.173);">Mon 23.05.22</span>
<span class="t" style="left:383.3px;top:540.8px;font-size:14.1px;color:#111;transform:scaleX(1.133);">Fri 27.05.22</span>
<span class="t" style="left:546.3px;top:540.8px;font-size:14.1px;color:#111;transform:scaleX(1.088);">4 days</span>
<span class="t" style="left:653.5px;top:540.8px;font-size:14.1px;color:#111;transform:scaleX(0.969);">8</span>
<span class="t" style="left:47.2px;top:567.6px;font-size:14.5px;color:#6A6A6A;">13</span>
<span class="t" style="left:95.5px;top:568.8px;font-size:14.1px;font-weight:700;color:#111;transform:scaleX(1.104);">Budget</span>
<span class="t" style="left:47.2px;top:595.6px;font-size:14.5px;color:#6A6A6A;">14</span>
<span class="t" style="left:111.3px;top:596.8px;font-size:14.1px;color:#111;transform:scaleX(1.162);">Work with Sponsors</span>
<span class="t" style="left:276.2px;top:596.8px;font-size:14.1px;color:#111;transform:scaleX(1.133);">Fri 27.05.22</span>
<span class="t" style="left:383.3px;top:596.8px;font-size:14.1px;color:#111;transform:scaleX(1.173);">Mon 13.06.22</span>
<span class="t" style="left:546.3px;top:596.8px;font-size:14.1px;color:#111;transform:scaleX(1.128);">11 days</span>
<span class="t" style="left:653.5px;top:596.8px;font-size:14.1px;color:#111;transform:scaleX(1.153);">4;9;12</span>
<span class="t" style="left:47.2px;top:623.6px;font-size:14.5px;color:#6A6A6A;">15</span>
<span class="t" style="left:111.3px;top:624.8px;font-size:14.1px;color:#111;transform:scaleX(1.217);">Work with</span>
<span class="t" style="left:111.3px;top:646.8px;font-size:14.1px;color:#111;transform:scaleX(1.183);">Contractors</span>
<span class="t" style="left:276.2px;top:624.8px;font-size:14.1px;color:#111;transform:scaleX(1.133);">Fri 27.05.22</span>
<span class="t" style="left:383.3px;top:624.8px;font-size:14.1px;color:#111;transform:scaleX(1.173);">Mon 13.06.22</span>
<span class="t" style="left:546.3px;top:624.8px;font-size:14.1px;color:#111;transform:scaleX(1.128);">11 days</span>
<span class="t" style="left:653.5px;top:624.8px;font-size:14.1px;color:#111;transform:scaleX(1.153);">4;9;12</span>
<span class="t" style="left:47.2px;top:671.6px;font-size:14.5px;color:#6A6A6A;">16</span>
<span class="t" style="left:111.3px;top:672.8px;font-size:14.1px;color:#111;transform:scaleX(1.177);">Model Product Life</span>
<span class="t" style="left:111.3px;top:694.8px;font-size:14.1px;color:#111;transform:scaleX(1.084);">Cycle</span>
<span class="t" style="left:276.2px;top:672.8px;font-size:14.1px;color:#111;transform:scaleX(1.133);">Fri 27.05.22</span>
<span class="t" style="left:383.3px;top:672.8px;font-size:14.1px;color:#111;transform:scaleX(1.133);">Thu 16.06.22</span>
<span class="t" style="left:546.3px;top:672.8px;font-size:14.1px;color:#111;transform:scaleX(1.104);">14 days</span>
<span class="t" style="left:653.5px;top:672.8px;font-size:14.1px;color:#111;transform:scaleX(1.153);">4;9;12</span>
<span class="t" style="left:47.2px;top:719.6px;font-size:14.5px;color:#6A6A6A;">17</span>
<span class="t" style="left:95.5px;top:720.8px;font-size:14.1px;font-weight:700;color:#111;transform:scaleX(1.081);">Pricing Strategy</span>
<span class="t" style="left:383.3px;top:720.8px;font-size:14.1px;font-weight:700;color:#111;transform:scaleX(1.139);">Thu 14.07.22</span>
<span class="t" style="left:546.3px;top:720.8px;font-size:14.1px;font-weight:700;color:#111;transform:scaleX(1.091);">20 days</span>
<span class="t" style="left:47.2px;top:747.6px;font-size:14.5px;color:#6A6A6A;">18</span>
<span class="t" style="left:111.3px;top:748.8px;font-size:14.1px;color:#111;transform:scaleX(1.097);">Plan A</span>
<span class="t" style="left:276.2px;top:748.8px;font-size:14.1px;color:#111;transform:scaleX(1.133);">Thu 16.06.22</span>
<span class="t" style="left:383.3px;top:748.8px;font-size:14.1px;color:#111;transform:scaleX(1.140);">Tue 05.07.22</span>
<span class="t" style="left:546.3px;top:748.8px;font-size:14.1px;color:#111;transform:scaleX(1.104);">13 days</span>
<span class="t" style="left:653.5px;top:748.8px;font-size:14.1px;color:#111;transform:scaleX(1.165);">4;9;12;16</span>
<span class="t" style="left:47.2px;top:775.6px;font-size:14.5px;color:#6A6A6A;">19</span>
<span class="t" style="left:276.2px;top:776.8px;font-size:14.1px;color:#111;transform:scaleX(1.133);">Thu 16.06.22</span>
<span class="t" style="left:383.3px;top:776.8px;font-size:14.1px;color:#111;transform:scaleX(1.133);">Thu 14.07.22</span>
<span class="t" style="left:546.3px;top:776.8px;font-size:14.1px;color:#111;transform:scaleX(1.104);">20 days</span>
<span class="t" style="left:653.5px;top:776.8px;font-size:14.1px;color:#111;transform:scaleX(1.165);">4;9;12;16</span>
<span class="t" style="left:47.2px;top:803.6px;font-size:14.5px;color:#6A6A6A;">20</span>
<span class="t" style="left:95.5px;top:804.8px;font-size:14.1px;font-weight:700;color:#111;transform:scaleX(1.162);">Marketing&amp;Promotion</span>
<span class="t" style="left:276.2px;top:804.8px;font-size:14.1px;color:#111;transform:scaleX(1.155);">Wed 06.07.22</span>
<span class="t" style="left:383.3px;top:804.8px;font-size:14.1px;color:#111;transform:scaleX(1.140);">Tue 02.08.22</span>
<span class="t" style="left:546.3px;top:804.8px;font-size:14.1px;color:#111;transform:scaleX(1.104);">19 days</span>
<span class="t" style="left:47.2px;top:831.6px;font-size:14.5px;color:#6A6A6A;">21</span>
<span class="t" style="left:95.5px;top:832.8px;font-size:14.1px;font-weight:700;color:#111;transform:scaleX(1.089);">Sales &amp; Distribution</span>
<span class="t" style="left:95.5px;top:854.8px;font-size:14.1px;font-weight:700;color:#111;transform:scaleX(1.099);">Strategy</span>
<span class="t" style="left:276.2px;top:832.8px;font-size:14.1px;font-weight:700;color:#111;transform:scaleX(1.153);">Wed</span>
<span class="t" style="left:276.2px;top:854.8px;font-size:14.1px;font-weight:700;color:#111;transform:scaleX(1.154);">06.07.22</span>
<span class="t" style="left:47.2px;top:879.6px;font-size:14.5px;color:#6A6A6A;">22</span>
<span class="t" style="left:111.3px;top:880.8px;font-size:14.1px;color:#111;transform:scaleX(1.064);">Stage 1</span>
<span class="t" style="left:276.2px;top:880.8px;font-size:14.1px;color:#111;transform:scaleX(1.155);">Wed 06.07.22</span>
<span class="t" style="left:383.3px;top:880.8px;font-size:14.1px;color:#111;transform:scaleX(1.133);">Thu 14.07.22</span>
<span class="t" style="left:546.3px;top:880.8px;font-size:14.1px;color:#111;transform:scaleX(1.088);">6 days</span>
<span class="t" style="left:47.2px;top:907.6px;font-size:14.5px;color:#6A6A6A;">23</span>
<span class="t" style="left:111.3px;top:908.8px;font-size:14.1px;color:#111;transform:scaleX(1.064);">Stage 2</span>
<span class="t" style="left:276.2px;top:908.8px;font-size:14.1px;color:#111;transform:scaleX(1.155);">Wed 06.07.22</span>
<span class="t" style="left:383.3px;top:908.8px;font-size:14.1px;color:#111;transform:scaleX(1.155);">Wed 13.07.22</span>
<span class="t" style="left:546.3px;top:908.8px;font-size:14.1px;color:#111;transform:scaleX(1.088);">5 days</span>
<span class="t" style="left:769.2px;top:188.2px;font-size:12.2px;color:#6B6B6B;">04.04</span>
<span class="t" style="left:826.2px;top:188.2px;font-size:12.2px;color:#6B6B6B;transform:scaleX(1.031);">11.04</span>
<span class="t" style="left:883.2px;top:188.2px;font-size:12.2px;color:#6B6B6B;">18.04</span>
<span class="t" style="left:940.2px;top:188.2px;font-size:12.2px;color:#6B6B6B;">25.04</span>
<span class="t" style="left:997.2px;top:188.2px;font-size:12.2px;color:#6B6B6B;">02.05</span>
<span class="t" style="left:1054.2px;top:188.2px;font-size:12.2px;color:#6B6B6B;">09.05</span>
<span class="t" style="left:1111.2px;top:188.2px;font-size:12.2px;color:#6B6B6B;">16.05</span>
<span class="t" style="left:1168.2px;top:188.2px;font-size:12.2px;color:#6B6B6B;">23.05</span>
<span class="t" style="left:1225.2px;top:188.2px;font-size:12.2px;color:#6B6B6B;">30.05</span>
<span class="t" style="left:1282.2px;top:188.2px;font-size:12.2px;color:#6B6B6B;">06.06</span>
<span class="t" style="left:1339.2px;top:188.2px;font-size:12.2px;color:#6B6B6B;">13.06</span>
<span class="t" style="left:1396.2px;top:188.2px;font-size:12.2px;color:#6B6B6B;">20.06</span>
<span class="t" style="left:1453.2px;top:188.2px;font-size:12.2px;color:#6B6B6B;">27.06</span>
<span class="t" style="left:1510.2px;top:188.2px;font-size:12.2px;color:#6B6B6B;">04.07</span>
<span class="t" style="left:1567.2px;top:188.2px;font-size:12.2px;color:#6B6B6B;transform:scaleX(1.031);">11.07</span>
<span class="t" style="left:1624.2px;top:188.2px;font-size:12.2px;color:#6B6B6B;">18.07</span>
<span class="t" style="left:982.2px;top:168.6px;font-size:12.2px;color:#6B6B6B;transform:scaleX(1.046);">May 2022</span>
<span class="t" style="left:1234.4px;top:168.6px;font-size:12.2px;color:#6B6B6B;">June 2022</span>
<span class="t" style="left:1478.0px;top:168.6px;font-size:12.2px;color:#6B6B6B;transform:scaleX(1.006);">July 2022</span>
<span class="t" style="left:788.4px;top:208.5px;font-size:15.9px;font-weight:700;color:#0a0a0a;transform:scaleX(1.038);">Market Research</span>
<span class="t" style="left:878.7px;top:340.5px;font-size:15.9px;font-weight:700;color:#0a0a0a;transform:scaleX(1.039);">Product Concept</span>
<span class="t" style="left:1163.5px;top:480.5px;font-size:15.9px;font-weight:700;color:#0a0a0a;transform:scaleX(1.021);">Features&amp;Functions</span>
<span class="t" style="left:1195.6px;top:564.5px;font-size:15.9px;font-weight:700;color:#0a0a0a;transform:scaleX(1.060);">Budget</span>
<span class="t" style="left:1358.7px;top:716.5px;font-size:15.9px;font-weight:700;color:#0a0a0a;transform:scaleX(1.056);">Pricing Strategy</span>
<span class="t" style="left:19.2px;top:99.9px;font-size:14.6px;color:#2B2B2B;">Gantt</span>
<span class="t" style="left:11.7px;top:120.0px;font-size:14.6px;color:#2B2B2B;">Chart</span>
<span class="t" style="left:22.6px;top:144.1px;font-size:14.6px;color:#2B2B2B;transform:scaleX(0.835);">View</span>
<span class="t" style="left:93.5px;top:99.9px;font-size:14.6px;color:#2B2B2B;transform:scaleX(0.884);">Paste</span>
<span class="t" style="left:164.7px;top:58.2px;font-size:14.6px;color:#2B2B2B;transform:scaleX(0.920);">Cut</span>
<span class="t" style="left:164.7px;top:87.2px;font-size:14.6px;color:#2B2B2B;transform:scaleX(0.971);">Copy</span>
<span class="t" style="left:164.7px;top:116.2px;font-size:14.6px;color:#2B2B2B;transform:scaleX(0.987);">Format Painter</span>
<span class="t" style="left:146.6px;top:144.1px;font-size:14.6px;color:#2B2B2B;transform:scaleX(0.912);">Clipboard</span>
<span class="t" style="left:25.0px;top:20.9px;font-size:14.2px;color:#fff;transform:scaleX(0.988);">File</span>
<span class="t" style="left:87.8px;top:20.9px;font-size:14.2px;color:#31752F;transform:scaleX(0.943);">Task</span>
<span class="t" style="left:142.0px;top:20.9px;font-size:14.2px;color:#fff;transform:scaleX(0.981);">Resource</span>
<span class="t" style="left:229.0px;top:20.9px;font-size:14.2px;color:#fff;transform:scaleX(1.052);">Report</span>
<span class="t" style="left:301.0px;top:20.9px;font-size:14.2px;color:#fff;transform:scaleX(1.030);">Project</span>
<span class="t" style="left:373.6px;top:20.9px;font-size:14.2px;color:#fff;transform:scaleX(1.052);">View</span>
<span class="t" style="left:433.0px;top:20.9px;font-size:14.2px;color:#fff;transform:scaleX(1.096);">Help</span>
<span class="t" style="left:494.0px;top:20.9px;font-size:14.2px;color:#fff;transform:scaleX(1.031);">Gantt Chart Format</span>
<span class="t" style="left:684.0px;top:20.9px;font-size:14.2px;color:#fff;transform:scaleX(1.077);">Tell me what you want to do</span>
<span class="t" style="left:292.6px;top:67.9px;font-size:14px;color:#2B2B2B;transform:scaleX(1.053);">Calibri</span>
<span class="t" style="left:413.4px;top:67.9px;font-size:14px;color:#2B2B2B;transform:scaleX(0.921);">11</span>
<span class="t" style="left:297.8px;top:106.4px;font-size:14.5px;font-weight:700;color:#444;transform:scaleX(0.916);">B</span>
<span class="t" style="left:329.1px;top:104.9px;font-size:16.5px;font-weight:700;font-style:italic;color:#444;transform:scaleX(1.150);font-family:'Liberation Serif',serif;">I</span>
<span class="t" style="left:357.1px;top:106.4px;font-size:14px;font-weight:700;color:#444;transform:scaleX(1.047);">U</span>
<span class="t" style="left:443.0px;top:101.9px;font-size:17.2px;color:#3c3c3c;transform:scaleX(1.046);">A</span>
<span class="t" style="left:362.4px;top:144.1px;font-size:14.6px;color:#2B2B2B;transform:scaleX(0.842);">Font</span>
<span class="t" style="left:511.1px;top:74.5px;font-size:7.6px;color:#333;transform:scaleX(0.865);">0%</span>
<span class="t" style="left:538.6px;top:74.5px;font-size:7.6px;color:#333;transform:scaleX(0.967);">25%</span>
<span class="t" style="left:568.5px;top:74.5px;font-size:7.6px;color:#333;transform:scaleX(0.967);">50%</span>
<span class="t" style="left:598.6px;top:74.5px;font-size:7.6px;color:#333;transform:scaleX(0.967);">75%</span>
<span class="t" style="left:627.3px;top:74.5px;font-size:7.6px;color:#333;transform:scaleX(0.875);">100%</span>
<span class="t" style="left:692.6px;top:58.2px;font-size:14.6px;color:#2B2B2B;transform:scaleX(0.993);">Mark on Track</span>
<span class="t" style="left:692.6px;top:87.2px;font-size:14.6px;color:#2B2B2B;transform:scaleX(0.952);">Respect Links</span>
<span class="t" style="left:692.6px;top:116.2px;font-size:14.6px;color:#2B2B2B;transform:scaleX(1.007);">Inactivate</span>
<span class="t" style="left:630.0px;top:144.3px;font-size:14.6px;color:#2B2B2B;transform:scaleX(0.845);">Schedule</span>
<span class="t" style="left:835.4px;top:99.9px;font-size:14.6px;color:#2B2B2B;transform:scaleX(1.015);">Manually</span>
<span class="t" style="left:835.4px;top:120.0px;font-size:14.6px;color:#2B2B2B;transform:scaleX(0.969);">Schedule</span>
<span class="t" style="left:914.5px;top:99.9px;font-size:14.6px;color:#2B2B2B;transform:scaleX(1.029);">Auto</span>
<span class="t" style="left:900.6px;top:120.0px;font-size:14.6px;color:#2B2B2B;transform:scaleX(0.969);">Schedule</span>
<span class="t" style="left:988.1px;top:61.8px;font-size:10.5px;font-weight:700;color:#3a2c10;">?</span>
<span class="t" style="left:1002.5px;top:58.2px;font-size:14.6px;color:#2B2B2B;transform:scaleX(0.982);">Inspect</span>
<span class="t" style="left:1002.5px;top:87.2px;font-size:14.6px;color:#B8B8B8;transform:scaleX(1.014);">Move</span>
<span class="t" style="left:989.2px;top:116.9px;font-size:17.5px;font-weight:700;color:#3D6A98;transform:scaleX(0.860);">?</span>
<span class="t" style="left:1002.5px;top:116.2px;font-size:14.6px;color:#2B2B2B;transform:scaleX(1.046);">Mode</span>
<span class="t" style="left:939.5px;top:144.1px;font-size:14.6px;color:#2B2B2B;transform:scaleX(0.807);">Tasks</span>
<span class="t" style="left:1110.4px;top:99.9px;font-size:14.6px;color:#2B2B2B;transform:scaleX(0.906);">Task</span>
<span class="t" style="left:1178.6px;top:58.2px;font-size:14.6px;color:#2B2B2B;transform:scaleX(0.977);">Summary</span>
<span class="t" style="left:1178.6px;top:87.2px;font-size:14.6px;color:#2B2B2B;transform:scaleX(1.023);">Milestone</span>
<span class="t" style="left:1178.6px;top:116.2px;font-size:14.6px;color:#B8B8B8;transform:scaleX(1.031);">Deliverable</span>
<span class="t" style="left:1170.3px;top:144.1px;font-size:14.6px;color:#2B2B2B;transform:scaleX(0.855);">Insert</span>
<span class="t" style="left:1299.3px;top:99.9px;font-size:14.6px;color:#2B2B2B;transform:scaleX(1.060);">Information</span>
<span class="t" style="left:1408.5px;top:58.2px;font-size:14.6px;color:#2B2B2B;">Notes</span>
<span class="t" style="left:1408.5px;top:87.2px;font-size:14.6px;color:#2B2B2B;transform:scaleX(1.015);">Details</span>
<span class="t" style="left:1408.5px;top:116.2px;font-size:14.6px;color:#B8B8B8;transform:scaleX(1.055);">Add to Timeline</span>
<span class="t" style="left:1379.0px;top:144.1px;font-size:14.6px;color:#2B2B2B;transform:scaleX(0.895);">Properties</span>
<span class="t" style="left:1551.6px;top:99.9px;font-size:14.6px;color:#2B2B2B;transform:scaleX(0.975);">Scroll</span>
<span class="t" style="left:1547.3px;top:120.0px;font-size:14.6px;color:#2B2B2B;transform:scaleX(0.972);">to Task</span>
<span class="t" style="left:1573.7px;top:143.7px;font-size:14.6px;color:#2B2B2B;transform:scaleX(0.867);">Editing</span>
<div class="clip" style="left:0;top:0;width:1672px;height:931px"><span class="t" style="left:1521.3px;top:800.5px;font-size:15.9px;font-weight:700;color:#0a0a0a;transform:scaleX(1.101);">Marketing&amp;Promotion</span>
<span class="t" style="left:1521.3px;top:828.5px;font-size:15.9px;font-weight:700;color:#0a0a0a;transform:scaleX(1.063);">Sales &amp; Distribution</span></div>
<div class="clip" style="left:757px;top:161px;width:200px;height:30px"><div style="position:absolute;left:-757px;top:-161px"><span class="t" style="left:738.9px;top:168.6px;font-size:12.2px;color:#6B6B6B;transform:scaleX(1.029);">April 2022</span></div></div>
<div class="clip" style="left:0;top:0;width:380px;height:931px"><span class="t" style="left:276.2px;top:344.8px;font-size:14.1px;font-weight:700;color:#111;transform:scaleX(1.139);">Thu 14.04.22</span>
<span class="t" style="left:276.2px;top:484.8px;font-size:14.1px;font-weight:700;color:#111;transform:scaleX(1.178);">Mon 23.05.22</span>
<span class="t" style="left:276.2px;top:720.8px;font-size:14.1px;font-weight:700;color:#111;transform:scaleX(1.139);">Thu 16.06.22</span></div>
<div class="vl">GANTT CHART</div>
</div>
</body></html>
